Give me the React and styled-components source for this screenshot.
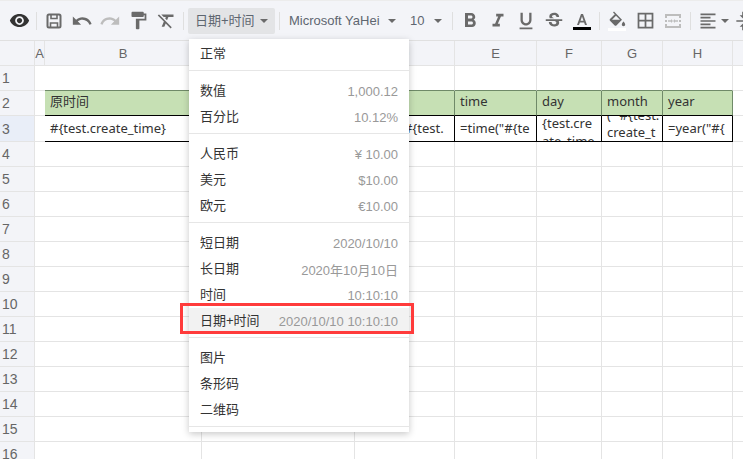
import styled, { createGlobalStyle } from "styled-components";
import {
  MdVisibility,
  MdUndo,
  MdRedo,
  MdFormatPaint,
  MdFormatClear,
  MdFormatBold,
  MdFormatItalic,
  MdFormatUnderlined,
  MdStrikethroughS,
  MdBorderAll,
  MdFormatAlignLeft,
  MdVerticalAlignCenter,
} from "react-icons/md";

const CJK = `"Liberation Sans", "Noto Sans CJK SC", sans-serif`;
const CELL_FONT = `"Noto Sans", "Noto Sans CJK SC", sans-serif`;
const LINE = "#e4e4e4";
const HEAD = "#f3f4f8";
const GREEN_EDGE = "#6f8a68";

const Global = createGlobalStyle`
  html, body { margin: 0; padding: 0; background: #fff; }
  body { font-family: ${CJK}; overflow: hidden; }
`;

const Page = styled.div`
  position: relative;
  width: 743px;
  height: 459px;
  overflow: hidden;
`;

const Toolbar = styled.div`
  display: flex;
  align-items: center;
  box-sizing: border-box;
  height: 41px;
  padding-left: 5px;
  background: ${HEAD};
  border-top: 1px solid #ececec;
  border-bottom: 1px solid #e0e0e0;
  overflow: hidden;
`;

const IconButton = styled.div`
  flex: none;
  display: flex;
  align-items: center;
  justify-content: center;
  width: ${(p) => p.$width || 28}px;
  height: 26px;
  font-size: ${(p) => p.$size || 20}px;
  color: ${(p) => p.$color || "#6a6a6a"};
`;

const Divider = styled.div`
  flex: none;
  width: 1px;
  height: 18px;
  margin: 0 ${(p) => p.$right || 3}px 0 ${(p) => p.$left || 3}px;
  background: #dfdfdf;
`;

const Dropdown = styled.div`
  flex: none;
  display: flex;
  align-items: center;
  justify-content: space-between;
  box-sizing: border-box;
  width: ${(p) => p.$width}px;
  height: 26px;
  padding: ${(p) => p.$padding || "0 7px"};
  border-radius: 2px;
  font-size: 13px;
  color: #5e6670;
  background: ${(p) => (p.$active ? "#e3e4e6" : "transparent")};
`;

const Caret = styled.span`
  flex: none;
  width: 0;
  height: 0;
  border-left: 4px solid transparent;
  border-right: 4px solid transparent;
  border-top: 4px solid #6a6a6a;
`;

const Sheet = styled.div`
  display: grid;
  grid-template-columns: 35px 10px 157px 153px 100px 82px 65px 61px 70px 1fr;
  grid-template-rows: 25px 25px 25px 26px repeat(13, 25px);
`;

const Cell = styled.div`
  box-sizing: border-box;
  display: flex;
  align-items: ${(p) => p.$valign || "center"};
  min-width: 0;
  padding: 0 5px ${(p) => p.$lift || 0}px;
  overflow: hidden;
  white-space: nowrap;
  font-family: ${CELL_FONT};
  font-size: 13px;
  line-height: 17px;
  color: #333;
  background: ${(p) => p.$bg || "#fff"};
  border-right: 1px solid ${(p) => p.$right || LINE};
  border-bottom: 1px solid ${(p) => p.$bottom || LINE};
`;

const CellLines = styled.div`
  flex: none;
  margin-top: ${(p) => p.$top || 0}px;
  line-height: ${(p) => p.$lineHeight}px;
`;

const ColHead = styled.div`
  box-sizing: border-box;
  display: flex;
  align-items: center;
  justify-content: center;
  font-size: 13px;
  color: #666;
  background: ${HEAD};
  border-right: 1px solid ${LINE};
  border-bottom: 1px solid ${LINE};
`;

const RowHead = styled(ColHead)`
  justify-content: flex-start;
  padding-left: 2px;
  font-size: 14px;
  background: ${(p) => (p.$selected ? "#e9eef8" : HEAD)};
`;

const Menu = styled.div`
  position: absolute;
  left: 189px;
  top: 39px;
  width: 220px;
  padding: 2px 0;
  background: #fff;
  box-shadow: 0 2px 7px rgba(0, 0, 0, 0.22);
`;

const MenuItem = styled.div`
  display: flex;
  align-items: center;
  justify-content: space-between;
  height: 26px;
  padding: 0 11px;
  font-size: 13px;
  color: #333;
  background: ${(p) => (p.$active ? "#f2f2f2" : "transparent")};
`;

const Label = styled.span`
  margin-bottom: 3px;
`;

const Hint = styled.span`
  color: #999;
`;

const MenuLine = styled.div`
  height: 1px;
  margin: 3px 0 ${(p) => (p.$last ? 3 : 7)}px;
  background: #e6e6e6;
`;

const Highlight = styled.div`
  position: absolute;
  left: 180px;
  top: 303px;
  box-sizing: border-box;
  width: 234px;
  height: 31px;
  border: 3px solid #ff3b3b;
`;

function SaveIcon() {
  return (
    <svg width="16" height="16" viewBox="0 0 16 16" fill="none" stroke="#6a6a6a" strokeWidth="2">
      <rect x="1.500" y="1.500" width="13" height="13" rx="1.500" />
      <path d="M5 2v3.500h6V2M4.500 14v-4h7v4" strokeWidth="1.600" />
    </svg>
  );
}

function TextColorIcon() {
  return (
    <svg width="20" height="20" viewBox="0 0 20 20">
      <path d="M9 3h2l4 11h-2l-.9-2.600H7.900L7 14H5L9 3zm-.5 6.800h3L10 5.400 8.500 9.800z" fill="#6a6a6a" />
      <rect x="1" y="16" width="18" height="3" fill="#000" />
    </svg>
  );
}

function FillIcon() {
  return (
    <svg width="20" height="22" viewBox="0 0 20 22">
      <path d="M7 1.500 6 2.500 7.800 4.300 3 9c-.5.500-.5 1.200 0 1.700l4.700 4.700c.5.500 1.200.5 1.700 0l5.600-5.600L7 1.500zM5 9.800 9 5.800l4 4H5zM16.500 11.500s-1.700 1.800-1.700 3c0 .9.800 1.700 1.700 1.700s1.700-.8 1.700-1.700c0-1.200-1.700-3-1.700-3z" fill="#6a6a6a" />
      <rect x="1" y="18" width="18" height="3" fill="#fff" />
    </svg>
  );
}

function MergeIcon() {
  return (
    <svg width="18" height="18" viewBox="0 0 18 18" fill="#bdbdbd">
      <path d="M1 2h16v4h-2V4H3v2H1V2zm0 10h2v2h12v-2h2v4H1v-4z" />
      <path d="M1 8h2v2H1zM15 8h2v2h-2zM4 8.300h3V7l2 2-2 2V9.700H4zM14 9.700h-3V11L9 9l2-2v1.300h3z" />
    </svg>
  );
}

const columns = ["A", "B", "C", "D", "E", "F", "G", "H", ""];

const headerRow = ["原时间", "", "date", "time", "day", "month", "year"];
const valueRow = [
  { text: "#{test.create_time}" },
  { text: "" },
  { text: '=date("#{test.' },
  { text: '=time("#{te' },
  { lines: ["{test.cre", "ate_time"], valign: "flex-start", lineHeight: 18, top: -2 },
  { lines: ['( "#{test.', "create_t"], valign: "flex-end", lineHeight: 17 },
  { text: '=year("#{' },
];

const menuGroups = [
  [{ label: "正常" }],
  [
    { label: "数值", hint: "1,000.12" },
    { label: "百分比", hint: "10.12%" },
  ],
  [
    { label: "人民币", hint: "¥ 10.00" },
    { label: "美元", hint: "$10.00" },
    { label: "欧元", hint: "€10.00" },
  ],
  [
    { label: "短日期", hint: "2020/10/10" },
    { label: "长日期", hint: "2020年10月10日" },
    { label: "时间", hint: "10:10:10" },
    { label: "日期+时间", hint: "2020/10/10 10:10:10", active: true },
  ],
  [{ label: "图片" }, { label: "条形码" }, { label: "二维码" }],
];

function renderRow(row) {
  const cells = [];
  for (let c = 0; c < 9; c++) {
    const key = `${row}-${c}`;
    const inTable = c >= 1 && c <= 7;
    if (row === 1) {
      // the row above the table: its bottom line is the table's top edge
      cells.push(<Cell key={key} $bottom={inTable ? GREEN_EDGE : undefined} />);
    } else if (row === 2) {
      const edge = c === 0 || inTable ? GREEN_EDGE : undefined;
      cells.push(
        <Cell key={key} $lift={3} $bg={inTable ? "#c6e0b4" : undefined} $right={edge} $bottom={inTable ? "#000" : undefined}>
          {inTable ? headerRow[c - 1] : ""}
        </Cell>
      );
    } else if (row === 3) {
      const item = inTable ? valueRow[c - 1] : null;
      const edge = c === 0 || inTable ? "#000" : undefined;
      cells.push(
        <Cell key={key} $valign={item?.valign} $right={edge} $bottom={inTable ? "#000" : undefined}>
          {item?.lines ? (
            <CellLines $lineHeight={item.lineHeight} $top={item.top}>
              {item.lines[0]}
              <br />
              {item.lines[1]}
            </CellLines>
          ) : (
            item?.text
          )}
        </Cell>
      );
    } else {
      cells.push(<Cell key={key} />);
    }
  }
  return cells;
}

export default function App() {
  const rows = Array.from({ length: 16 }, (_, i) => i + 1);

  return (
    <Page>
      <Global />
      <Toolbar>
        <IconButton $size={21} $color="#333"><MdVisibility /></IconButton>
        <Divider />
        <IconButton><SaveIcon /></IconButton>
        <IconButton $size={22}><MdUndo /></IconButton>
        <IconButton $size={22} $color="#bdbdbd"><MdRedo /></IconButton>
        <IconButton $size={21}><MdFormatPaint /></IconButton>
        <IconButton $size={21}><MdFormatClear /></IconButton>
        <Divider $right={4} />
        <Dropdown $width={87} $active>
          <Label>日期+时间</Label>
          <Caret />
        </Dropdown>
        <Divider $left={4} $right={4} />
        <Dropdown $width={116} $padding="0 4px 0 5px">
          Microsoft YaHei
          <Caret />
        </Dropdown>
        <Dropdown $width={48} $padding="0 6px 0 10px">
          10
          <Caret />
        </Dropdown>
        <Divider $left={4} />
        <IconButton $size={24}><MdFormatBold /></IconButton>
        <IconButton $size={22}><MdFormatItalic /></IconButton>
        <IconButton $size={22}><MdFormatUnderlined /></IconButton>
        <IconButton $size={22}><MdStrikethroughS /></IconButton>
        <IconButton><TextColorIcon /></IconButton>
        <Divider />
        <IconButton><FillIcon /></IconButton>
        <IconButton $size={21}><MdBorderAll /></IconButton>
        <IconButton><MergeIcon /></IconButton>
        <Divider />
        <IconButton $width={27}><MdFormatAlignLeft /></IconButton>
        <Caret />
        <IconButton><MdVerticalAlignCenter /></IconButton>
      </Toolbar>

      <Sheet>
        <ColHead />
        {columns.map((name, i) => (
          <ColHead key={i}>{name}</ColHead>
        ))}
        {rows.map((row) => [
          <RowHead key={`head-${row}`} $selected={row === 3}>{row}</RowHead>,
          ...renderRow(row),
        ])}
      </Sheet>

      <Menu>
        {menuGroups.map((group, g) => (
          <div key={g}>
            {group.map((item) => (
              <MenuItem key={item.label} $active={item.active}>
                <Label>{item.label}</Label>
                {item.hint && <Hint>{item.hint}</Hint>}
              </MenuItem>
            ))}
            <MenuLine $last={g === menuGroups.length - 1} />
          </div>
        ))}
      </Menu>
      <Highlight />
    </Page>
  );
}
